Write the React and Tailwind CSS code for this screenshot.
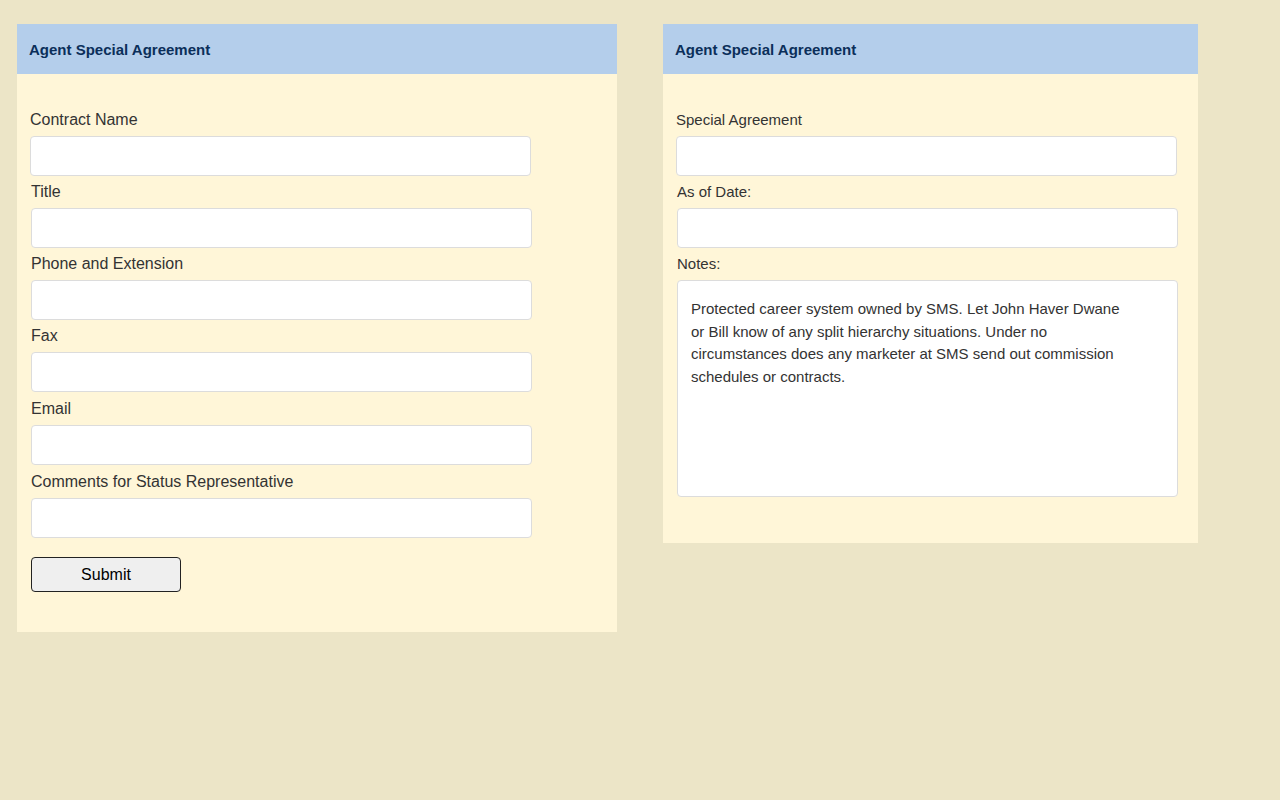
export default function App() {
  const font = { fontFamily: '"Liberation Sans", Arial, Helvetica, sans-serif' };
  const leftFields = [
    "Contract Name",
    "Title",
    "Phone and Extension",
    "Fax",
    "Email",
    "Comments for Status Representative",
  ];
  return (
    <div style={font} className="min-h-[800px] w-full bg-[#ece5c7] pt-[24px] pl-[17px]">
      <div className="flex items-start gap-[46px]">
        <div className="w-[600px] bg-[#fff6d8] pb-[40px]">
          <div className="flex h-[50px] items-center bg-[#b4ceeb] px-3 pt-[2px] text-[15px] font-bold text-[#0b2f5a]">
            Agent Special Agreement
          </div>
          <div className="pl-[14px] pt-[30px]">
            {leftFields.map((label, i) => (
              <div key={label} className={i === 0 ? "-ml-px" : ""}>
                <label
                  className={
                    (i >= 4 ? "mt-[6px] " : "mt-[5px] ") +
                    "mb-[5px] block text-[16px] leading-[22px] text-[#333333]"
                  }
                >
                  {label}
                </label>
                <input
                  type="text"
                  className="block h-[40px] w-[501px] rounded-[4px] border border-[#dcdcdc] bg-white"
                />
              </div>
            ))}
            <button className="mt-[19px] h-[35px] w-[150px] rounded-[4px] border border-[#222222] bg-[#efefef] text-[16px] text-black">
              Submit
            </button>
          </div>
        </div>

        <div className="w-[535px] bg-[#fff6d8] pb-[46px]">
          <div className="flex h-[50px] items-center bg-[#b4ceeb] px-3 pt-[2px] text-[15px] font-bold text-[#0b2f5a]">
            Agent Special Agreement
          </div>
          <div className="pl-[14px] pt-[30px]">
            <div className="-ml-px">
              <label className="mt-[5px] mb-[5px] block text-[15px] leading-[22px] text-[#333333]">
                Special Agreement
              </label>
              <input
                type="text"
                className="block h-[40px] w-[501px] rounded-[4px] border border-[#dcdcdc] bg-white"
              />
            </div>
            <div>
              <label className="mt-[5px] mb-[5px] block text-[15px] leading-[22px] text-[#333333]">
                As of Date:
              </label>
              <input
                type="text"
                className="block h-[40px] w-[501px] rounded-[4px] border border-[#dcdcdc] bg-white"
              />
            </div>
            <div>
              <label className="mt-[5px] mb-[5px] block text-[15px] leading-[22px] text-[#333333]">
                Notes:
              </label>
              <div className="h-[217px] w-[501px] rounded-[4px] border border-[#dcdcdc] bg-white pl-[13px] pt-[17px]">
                <p className="w-[438px] text-[15px] leading-[22.5px] text-[#333333]">
                  Protected career system owned by SMS. Let John Haver Dwane or Bill know of any split hierarchy situations. Under no circumstances does any marketer at SMS send out commission schedules or contracts.
                </p>
              </div>
            </div>
          </div>
        </div>
      </div>
    </div>
  );
}
